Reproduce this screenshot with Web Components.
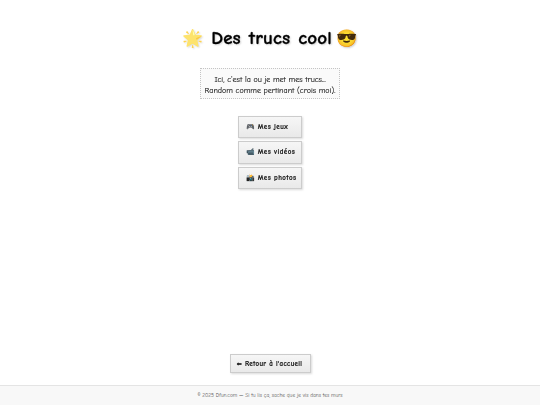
<!DOCTYPE html>
<html lang="fr"><head><meta charset="utf-8"><title>Des trucs cool</title>
<style>
html,body{margin:0;height:100%;background:#fff}
body{font-family:"Comic Sans MS","Comic Neue","DejaVu Sans",sans-serif;color:#222}
</style></head>
<body>
<truc-page>
  <truc-title>Des trucs cool</truc-title>
  <truc-note>Ici, c'est la ou je met mes trucs...<br>Random comme pertinant (crois moi).</truc-note>
  <truc-menu>
    <truc-button icon="🎮">Mes jeux</truc-button>
    <truc-button icon="📹">Mes vidéos</truc-button>
    <truc-button icon="📸">Mes photos</truc-button>
  </truc-menu>
  <truc-button slot="back" icon="⬅" wide>Retour à l'accueil</truc-button>
  <truc-footer slot="footer">© 2025 Dfun.com — Si tu lis ça, sache que je vis dans tes murs</truc-footer>
</truc-page>
<script>
// small helper so each element only declares its markup
class Base extends HTMLElement {
  constructor(html) {
    super();
    this.attachShadow({ mode: 'open' }).innerHTML = html;
  }
}

customElements.define('truc-page', class extends Base {
  constructor() {
    super(`<style>
      :host{display:flex;flex-direction:column;height:405px;overflow:hidden;box-sizing:border-box}
      main{flex:1;display:flex;flex-direction:column;align-items:center;padding-top:24px}
      .back{padding-bottom:12px;display:flex;justify-content:center}
    </style>
    <main><slot></slot></main>
    <div class="back"><slot name="back"></slot></div>
    <slot name="footer"></slot>`);
  }
});

customElements.define('truc-title', class extends Base {
  constructor() {
    super(`<style>
      :host{display:block;margin-bottom:17px;filter:blur(.25px)}
      h1{margin:0;display:flex;align-items:center;height:28px;font-size:19px;font-weight:700;color:#000;
         letter-spacing:.15px;word-spacing:1px;-webkit-text-stroke:.3px #000;text-shadow:1px 1px 2px rgba(0,0,0,.2);white-space:pre}
      .e{font-family:"Noto Color Emoji","Noto Sans",sans-serif;font-size:17px;letter-spacing:0;-webkit-text-stroke:0}
      .star{opacity:.72;margin-right:8px}
      .cool{margin-left:5px}
    </style>
    <h1><span class="e star">🌟</span><slot></slot><span class="e cool">😎</span></h1>`);
  }
});

customElements.define('truc-note', class extends Base {
  constructor() {
    super(`<style>
      :host{display:block;box-sizing:border-box;width:140px;height:31px;margin-bottom:16.5px;margin-top:-1px;
        border:1px dotted #c4c4c4;background:#fafafa;text-align:center;
        font-size:8px;line-height:11.5px;padding-top:4.5px;color:#111;white-space:nowrap;
        -webkit-text-stroke:.1px #111;filter:blur(.2px)}
    </style><slot></slot>`);
  }
});

customElements.define('truc-menu', class extends Base {
  constructor() {
    super(`<style>
      :host{display:flex;flex-direction:column;align-items:center;gap:3px}
    </style><slot></slot>`);
  }
});

customElements.define('truc-button', class extends Base {
  constructor() {
    super(`<style>
      :host{display:block;filter:blur(.2px)}
      a{display:flex;align-items:center;gap:3px;box-sizing:border-box;padding-left:7px;
        width:64px;height:22.5px;border:1px solid #ccc;background:linear-gradient(#f6f6f6,#e9e9e9);color:#111;
        font-size:7px;font-weight:700;letter-spacing:.45px;-webkit-text-stroke:.15px #111;
        box-shadow:1px 1px 2px rgba(0,0,0,.15);white-space:nowrap}
      :host([wide]) a{width:81px;height:19px;padding-left:6px;letter-spacing:.3px}
      .i{font-family:"Noto Color Emoji","Noto Sans",sans-serif;letter-spacing:0;font-size:7px;-webkit-text-stroke:0}
      :host([wide]) .i{font-family:"DejaVu Sans",sans-serif;color:#000;font-size:6.5px}
    </style><a><span class="i"></span><slot></slot></a>`);
    this.shadowRoot.querySelector('.i').textContent = this.getAttribute('icon');
  }
});

customElements.define('truc-footer', class extends Base {
  constructor() {
    super(`<style>
      :host{display:block;box-sizing:border-box;height:20px;background:#f8f8f8;border-top:1px solid #e4e4e4;
        text-align:center;font-size:5.4px;line-height:19px;color:#555;white-space:nowrap}
    </style><slot></slot>`);
  }
});
</script>
</body></html>
